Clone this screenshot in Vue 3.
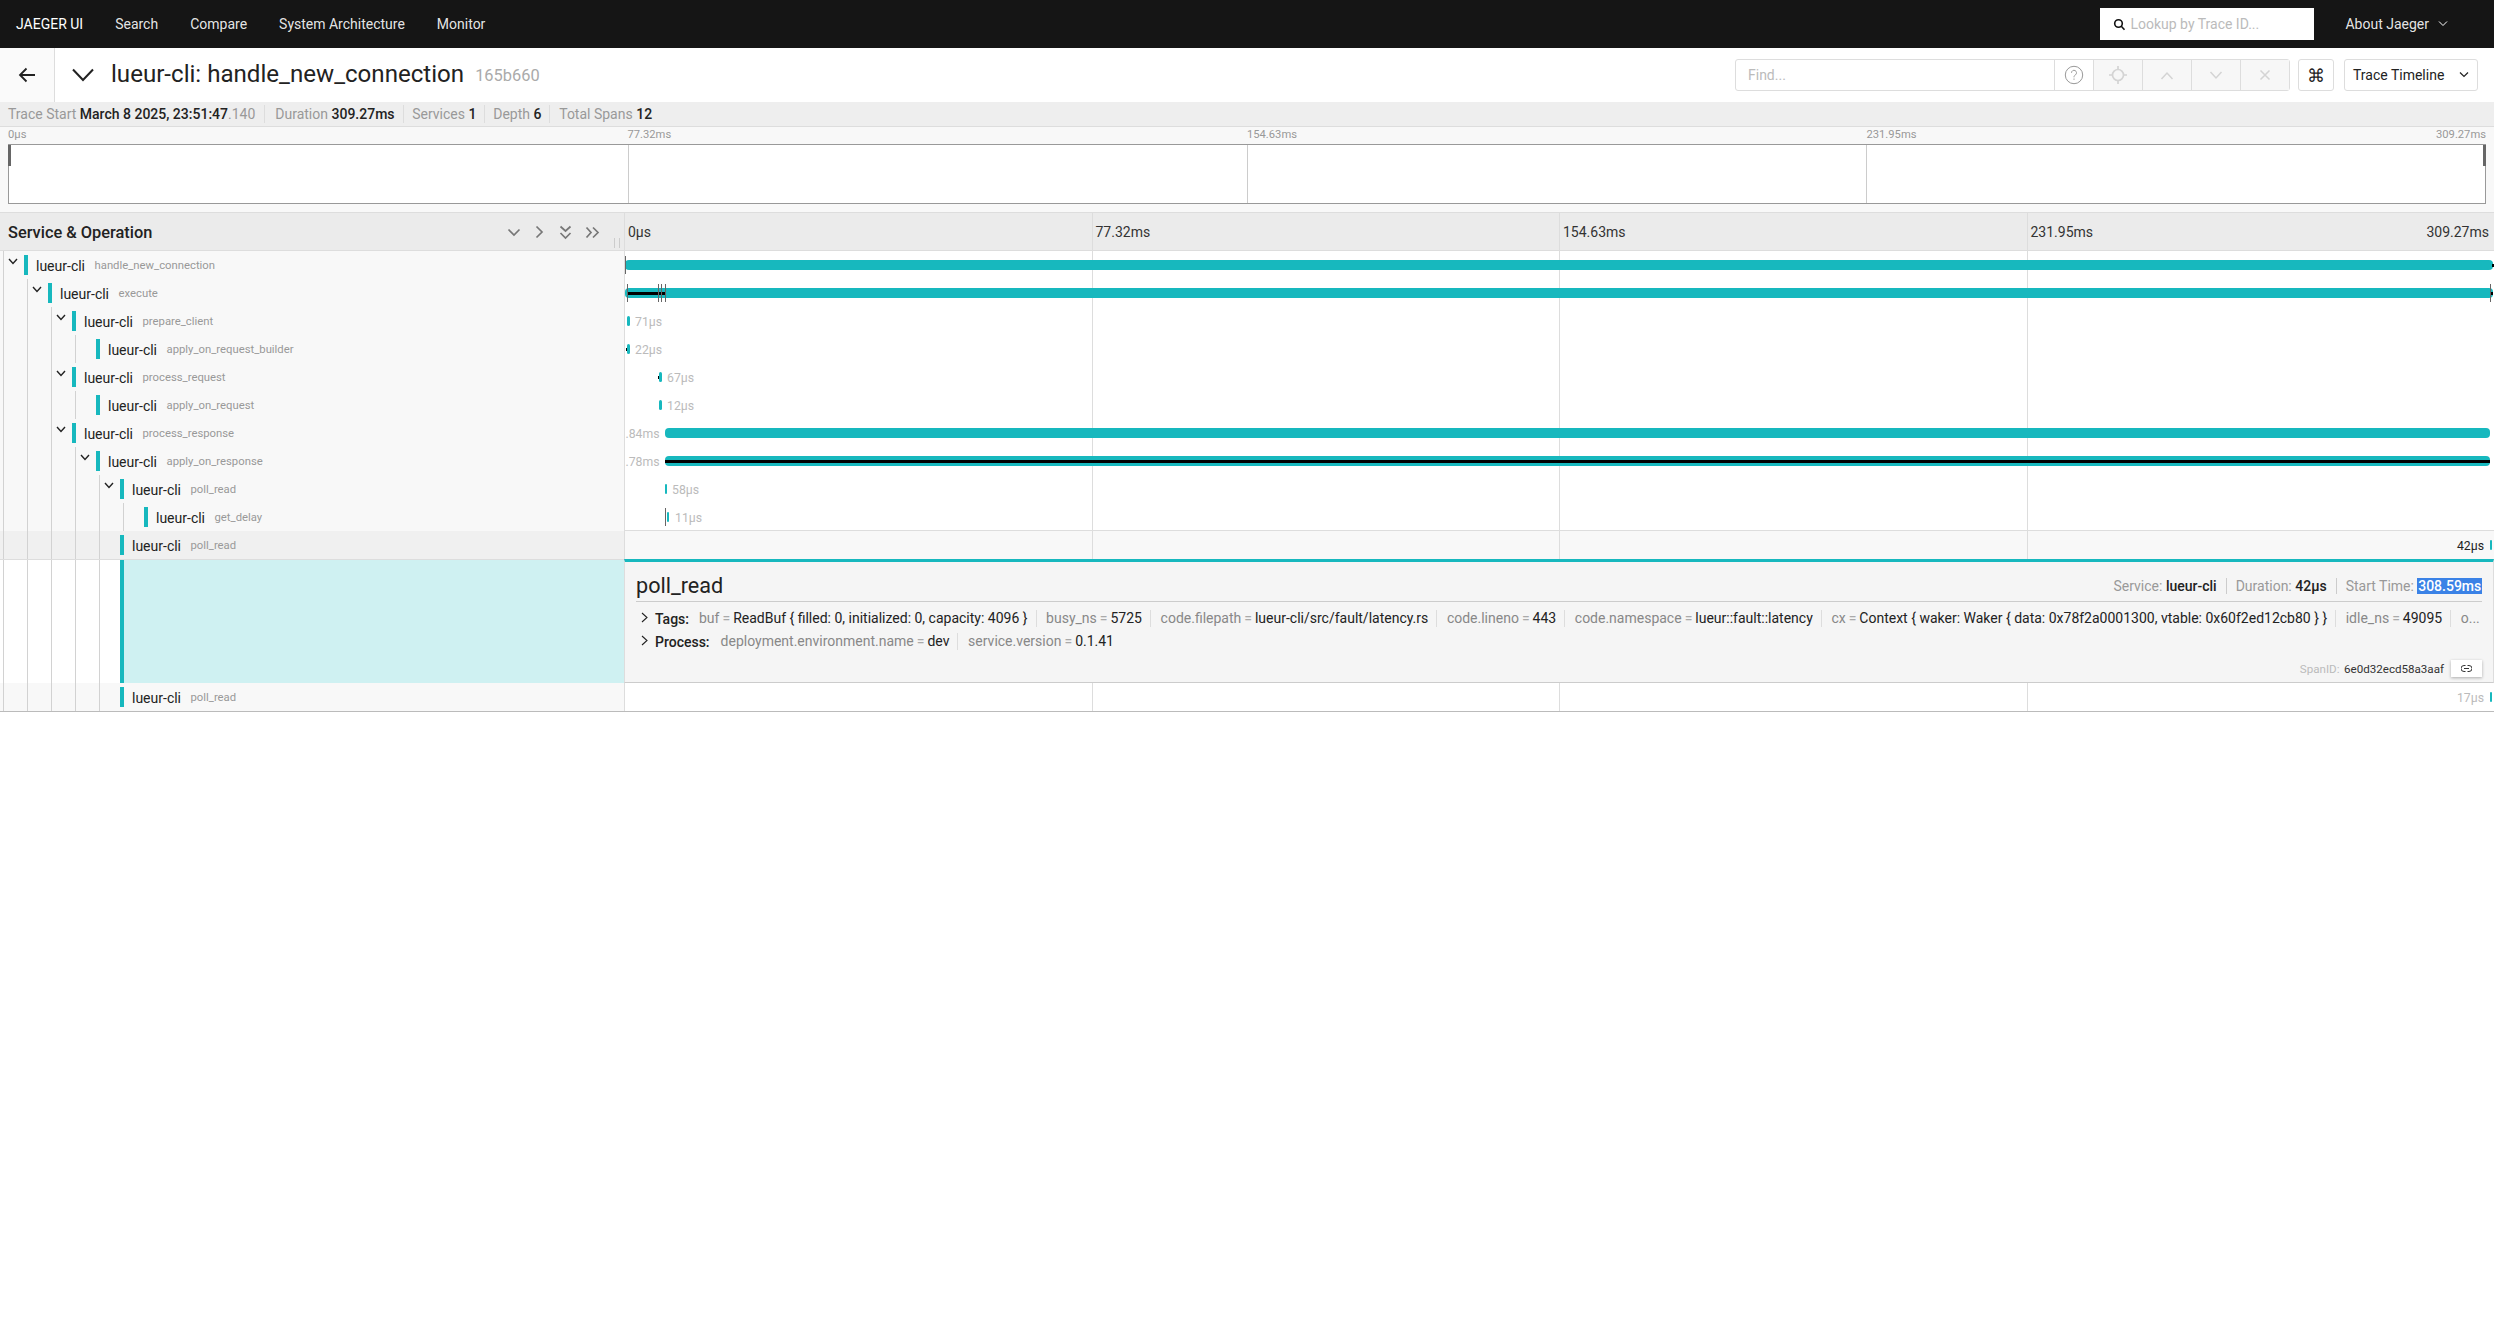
<script setup>
const rows = [
  { d: 0, op: 'handle_new_connection', kids: true, left: 0, w: 1868, ticks: [0], logs: [[1867, 2]] },
  { d: 1, op: 'execute', kids: true, left: 0, w: 1868, ticks: [2, 32.5, 36, 40, 1865], logs: [[2, 38], [1866, 2]] },
  { d: 2, op: 'prepare_client', kids: true, left: 2, w: 2.5, label: '71µs', labelAt: 10 },
  { d: 3, op: 'apply_on_request_builder', left: 2, w: 2.5, label: '22µs', labelAt: 10, logs: [[1, 1]] },
  { d: 2, op: 'process_request', kids: true, left: 34, w: 2.5, label: '67µs', labelAt: 42, logs: [[33, 1]] },
  { d: 3, op: 'apply_on_request', left: 34, w: 2.5, label: '12µs', labelAt: 42 },
  { d: 2, op: 'process_response', kids: true, left: 40, w: 1825, label: '.84ms', labelEnd: 34.5 },
  { d: 3, op: 'apply_on_response', kids: true, left: 40, w: 1825, label: '.78ms', labelEnd: 34.5, logs: [[40, 1825]] },
  { d: 4, op: 'poll_read', kids: true, left: 40, w: 2, label: '58µs', labelAt: 47 },
  { d: 5, op: 'get_delay', left: 42, w: 2, label: '11µs', labelAt: 50, ticks: [40] },
  { d: 4, op: 'poll_read', left: 1865, w: 2, label: '42µs', labelEnd: 1859, expanded: true },
  { d: 4, op: 'poll_read', left: 1865, w: 2, label: '17µs', labelEnd: 1859 },
]
const guides = (d) => Array.from({ length: d }, (_, i) => i)
const tags = [
  ['buf', 'ReadBuf { filled: 0, initialized: 0, capacity: 4096 }'],
  ['busy_ns', '5725'],
  ['code.filepath', 'lueur-cli/src/fault/latency.rs'],
  ['code.lineno', '443'],
  ['code.namespace', 'lueur::fault::latency'],
  ['cx', 'Context { waker: Waker { data: 0x78f2a0001300, vtable: 0x60f2ed12cb80 } }'],
  ['idle_ns', '49095'],
]
const procs = [
  ['deployment.environment.name', 'dev'],
  ['service.version', '0.1.41'],
]
</script>

<template>
  <div class="page">
    <nav class="nav">
      <span class="brand">JAEGER UI</span>
      <a class="nl">Search</a>
      <a class="nl">Compare</a>
      <a class="nl">System Architecture</a>
      <a class="nl">Monitor</a>
      <span class="sp"></span>
      <div class="lookup">
        <svg width="13" height="13" viewBox="0 0 13 13" fill="none" stroke="#111" stroke-width="1.6"><circle cx="5.5" cy="5.5" r="3.8" /><path d="M8.3 8.3 11.5 11.8" /></svg>
        <span>Lookup by Trace ID...</span>
      </div>
      <span class="about">About Jaeger
        <svg width="12" height="8" viewBox="0 0 12 8" fill="none" stroke="#fff" stroke-width="1"><path d="M2 1.5 6 5.5 10 1.5" /></svg>
      </span>
    </nav>

    <header class="head">
      <div class="back">
        <svg width="18" height="16" viewBox="0 0 18 16" fill="none" stroke="#222" stroke-width="1.8"><path d="M17 8H2M8.500 1.500 2 8l6.500 6.500" /></svg>
      </div>
      <svg class="collapse" width="24" height="14" viewBox="0 0 24 14" fill="none" stroke="#222" stroke-width="2"><path d="M2 1.500 12 12 22 1.500" /></svg>
      <h1 class="title">lueur-cli: handle_new_connection</h1>
      <span class="tid">165b660</span>
      <span class="sp"></span>
      <div class="find">
        <span class="find-in">Find...</span>
        <span class="fb help"><svg width="20" height="20" viewBox="0 0 20 20" fill="none" stroke="#999" stroke-width="1"><circle cx="10" cy="10" r="8.700" /><path d="M7.500 7.800a2.500 2.500 0 1 1 4 2C10.500 10.500 10 11 10 12.300M10 13.500v1.300" /></svg></span>
        <span class="fb dis"><svg width="18" height="18" viewBox="0 0 18 18" fill="none" stroke="#d4d4d4" stroke-width="1.700"><circle cx="9" cy="9" r="5.500" /><path d="M9 0v3.500M9 14.500V18M0 9h3.500M14.500 9H18" /></svg></span>
        <span class="fb dis"><svg width="14" height="9" viewBox="0 0 14 9" fill="none" stroke="#d4d4d4" stroke-width="1.500"><path d="M1.500 8 7 2l5.500 6" /></svg></span>
        <span class="fb dis"><svg width="14" height="9" viewBox="0 0 14 9" fill="none" stroke="#d4d4d4" stroke-width="1.500"><path d="M1.500 1 7 7l5.500-6" /></svg></span>
        <span class="fb dis"><svg width="12" height="12" viewBox="0 0 12 12" fill="none" stroke="#d4d4d4" stroke-width="1.500"><path d="M1.500 1.500l9 9M10.500 1.500l-9 9" /></svg></span>
      </div>
      <span class="kbd">⌘</span>
      <div class="view">Trace Timeline
        <svg width="12" height="8" viewBox="0 0 12 8" fill="none" stroke="#222" stroke-width="1.200"><path d="M2 1.500 6 5.500 10 1.500" /></svg>
      </div>
    </header>

    <div class="meta">
      <span class="mi"><i>Trace Start</i> <b>March 8 2025, 23:51:47</b><i>.140</i></span>
      <span class="mi"><i>Duration</i> <b>309.27ms</b></span>
      <span class="mi"><i>Services</i> <b>1</b></span>
      <span class="mi"><i>Depth</i> <b>6</b></span>
      <span class="mi last"><i>Total Spans</i> <b>12</b></span>
    </div>

    <section class="mini">
      <div class="mini-labels">
        <span>0µs</span><span>77.32ms</span><span>154.63ms</span><span>231.95ms</span><span class="end">309.27ms</span>
      </div>
      <div class="mini-box">
        <div class="mc"></div><div class="mc"></div><div class="mc"></div><div class="mc"></div>
        <i class="hand l"></i><i class="hand r"></i>
      </div>
    </section>

    <div class="thead">
      <div class="th-l">
        <span class="th-title">Service &amp; Operation</span>
        <span class="th-icons">
          <svg width="14" height="9" viewBox="0 0 14 9" fill="none" stroke="#777" stroke-width="1.700"><path d="M1.500 1.500 7 7l5.500-5.500" /></svg>
          <svg class="i2" width="9" height="14" viewBox="0 0 9 14" fill="none" stroke="#777" stroke-width="1.700"><path d="M1.500 1.500 7 7l-5.500 5.500" /></svg>
          <svg class="i3" width="13" height="15" viewBox="0 0 13 15" fill="none" stroke="#777" stroke-width="1.700"><path d="M1.500 1.500 6.500 6l5-4.500M1.500 8l5 5 5-5" /></svg>
          <svg class="i4" width="15" height="13" viewBox="0 0 15 13" fill="none" stroke="#777" stroke-width="1.700"><path d="M1.500 1.500 6 6.500l-4.500 5M8 1.500l5 5-5 5" /></svg>
        </span>
        <i class="grip"></i>
      </div>
      <div class="th-r">
        <div class="tc">0µs</div>
        <div class="tc">77.32ms</div>
        <div class="tc">154.63ms</div>
        <div class="tc lastc"><span>231.95ms</span><span>309.27ms</span></div>
      </div>
    </div>

    <div class="rows">
      <template v-for="(r, idx) in rows" :key="idx">
        <div class="row" :class="{ exp: r.expanded }">
          <div class="name">
            <span v-for="g in guides(r.d)" :key="g" class="guide"></span>
            <span class="guide tail">
              <svg v-if="r.kids" width="10" height="7" viewBox="0 0 10 7" fill="none" stroke="#222" stroke-width="1.400"><path d="M1 1 5 5.500 9 1" /></svg>
            </span>
            <span class="svc-bar"></span>
            <span class="svc">lueur-cli</span>
            <span class="op">{{ r.op }}</span>
          </div>
          <div class="tl">
            <div class="gc"></div><div class="gc"></div><div class="gc"></div><div class="gc"></div>
            <div class="bar" :style="{ left: r.left + 1 + 'px', width: r.w + 'px' }"></div>
            <i v-for="(l, li) in r.logs || []" :key="li" class="log" :style="{ left: l[0] + 1 + 'px', width: l[1] + 'px' }"></i>
            <i v-for="t in r.ticks || []" :key="t" class="tick" :style="{ left: t + 1 + 'px' }"></i>
            <span v-if="r.labelAt" class="dur" :style="{ left: r.labelAt + 1 + 'px' }">{{ r.label }}</span>
            <span v-if="r.labelEnd" class="dur" :class="{ dark: r.expanded }" :style="{ right: 1870 - r.labelEnd - 1 + 'px' }">{{ r.label }}</span>
          </div>
        </div>
        <div v-if="r.expanded" class="detail-row">
          <div class="name-d">
            <span v-for="g in guides(r.d)" :key="g" class="guide"></span>
            <span class="guide tail"></span>
            <span class="d-fill"></span>
          </div>
          <div class="detail">
            <div class="d-head">
              <h2 class="d-title">poll_read</h2>
              <div class="d-over">
                <span class="ov"><i>Service:</i> <b>lueur-cli</b></span>
                <span class="ov"><i>Duration:</i> <b>42µs</b></span>
                <span class="ov last"><i>Start Time:</i> <b class="sel">308.59ms</b></span>
              </div>
            </div>
            <div class="kv first">
              <svg class="cv" width="7" height="11" viewBox="0 0 7 11" fill="none" stroke="#222" stroke-width="1.100"><path d="M1 1 6 5.500 1 10" /></svg>
              <b class="kvh">Tags:</b>
              <span class="kvlist">
                <span v-for="t in tags" :key="t[0]" class="pair"><i>{{ t[0] }}</i><u>=</u>{{ t[1] }}</span>
                <span class="pair"><i>o...</i></span>
              </span>
            </div>
            <div class="kv">
              <svg class="cv" width="7" height="11" viewBox="0 0 7 11" fill="none" stroke="#222" stroke-width="1.100"><path d="M1 1 6 5.500 1 10" /></svg>
              <b class="kvh wide">Process:</b>
              <span class="kvlist">
                <span v-for="t in procs" :key="t[0]" class="pair"><i>{{ t[0] }}</i><u>=</u>{{ t[1] }}</span>
              </span>
            </div>
            <div class="d-foot">
              <i class="sid">SpanID:</i> <span class="sidv">6e0d32ecd58a3aaf</span>
              <span class="linkb"><svg width="11" height="7" viewBox="0 0 11 7" fill="none" stroke="#333" stroke-width="1"><path d="M4.500.5H3a3 3 0 0 0 0 6h1.500M6.500.5H8a3 3 0 0 1 0 6H6.500M3 3.500h5" /></svg></span>
            </div>
          </div>
        </div>
      </template>
    </div>
  </div>
</template>

<style>
html, body { background: #fff; }
</style>

<style scoped>
.page { font-family: Roboto, sans-serif; font-size: 14px; color: #222; width: 2494px; }
i { font-style: normal; }
u { text-decoration: none; }
.sp { flex: 1; }
.nav { height: 48px; background: #151515; color: #fff; display: flex; align-items: center; padding-left: 16px; box-sizing: border-box; }
.brand { margin-right: 32px; }
.nl { margin-right: 32px; color: rgba(255,255,255,.9); }
.lookup { width: 214px; height: 32px; background: #fff; box-sizing: border-box; display: flex; align-items: center; gap: 4px; padding-left: 13px; color: #bbb; }
.about { margin-left: 31px; margin-right: 45px; display: flex; align-items: center; gap: 8px; color: rgba(255,255,255,.9); }
.head { height: 54px; display: flex; align-items: center; background: #fff; }
.back { width: 54px; height: 54px; border-right: 1px solid #ddd; display: flex; align-items: center; justify-content: center; background: #fafafa; }
.collapse { margin-left: 16px; }
.title { font-size: 24.1px; font-weight: 400; margin: 0 0 3px 16px; }
.tid { margin-left: 11px; font-size: 16.4px; color: #aaa; }
.find { width: 555px; height: 32px; border: 1px solid #ddd; border-radius: 3px; box-sizing: border-box; display: flex; }
.find-in { width: 319px; color: #bbb; padding-left: 12px; line-height: 30px; box-sizing: border-box; }
.fb { border-left: 1px solid #ddd; display: flex; align-items: center; justify-content: center; box-sizing: border-box; width: 49px; }
.help { width: 39px; }
.dis { background: #f7f7f7; }
.kbd { width: 36px; height: 32px; margin-left: 8px; border: 1px solid #ddd; border-radius: 3px; box-sizing: border-box; display: flex; align-items: center; justify-content: center; font-size: 18px; }
.view { width: 134px; height: 32px; margin: 0 16px 0 10px; border: 1px solid #ddd; border-radius: 3px; box-sizing: border-box; display: flex; align-items: center; padding-left: 8px; gap: 14px; }
.meta { height: 25px; background: #eee; border-bottom: 1px solid #ddd; box-sizing: border-box; display: flex; align-items: center; padding-left: 8px; font-size: 14px; }
.mi { padding-right: 8px; margin-right: 8.8px; border-right: 1px solid #ddd; line-height: 18px; }
.mi:nth-child(1) { padding-right: 9px; margin-right: 10px; }
.mi:nth-child(2) { margin-right: 8.6px; }
.mi:nth-child(3) { margin-right: 7.8px; }
.mi.last { border: 0; }
.mi i { color: #999; }
.mi b { font-weight: 500; }
.mini { height: 85px; background: #f8f8f8; padding: 0 8px; box-sizing: border-box; }
.mini-labels { height: 17px; display: grid; grid-template-columns: 619.5px 619.5px 619.5px 1fr auto; font-size: 11.2px; color: #999; line-height: 15px; }
.mini-box { height: 60px; width: 2478px; background: #fff; border: 1px solid #999; box-sizing: border-box; display: grid; grid-template-columns: repeat(4, 1fr); position: relative; }
.mc + .mc { border-left: 1px solid #ccc; }
.hand { position: absolute; top: 0; width: 3px; height: 21px; background: #666; }
.hand.l { left: -1px; }
.hand.r { right: -1px; }
.thead { display: flex; height: 39px; background: #ebebeb; border-top: 1px solid #ddd; border-bottom: 1px solid #ddd; box-sizing: border-box; }
.th-l { width: 624px; box-sizing: border-box; display: flex; align-items: center; padding: 1px 0 0 8px; position: relative; flex: none; }
.th-title { font-size: 16.38px; font-weight: 500; flex: 1; }
.th-icons { display: flex; align-items: center; margin-right: 24px; }
.i2 { margin-left: 14px; }
.i3 { margin-left: 15px; }
.i4 { margin-left: 13px; }
.grip { position: absolute; right: 4px; bottom: 2px; width: 6px; height: 10px; border-left: 1px solid #ccc; border-right: 1px solid #ccc; box-sizing: border-box; }
.th-r { flex: 1; display: grid; grid-template-columns: repeat(4, 1fr); }
.tc { line-height: 38px; padding-left: 3px; color: #333; border-left: 1px solid #ddd; }
.lastc { display: flex; justify-content: space-between; padding-right: 5px; }
.rows { border-bottom: 1px solid #bbb; }
.row { display: flex; height: 28px; }
.name { width: 624px; box-sizing: border-box; flex: none; background: #f8f8f8; padding-left: 3px; display: flex; align-items: center; }
.guide { width: 24px; height: 100%; border-left: 1px solid #d2d2d2; box-sizing: border-box; flex: none; }
.guide.tail { width: 21px; display: flex; align-items: center; justify-content: center; padding: 0 3px 8px 0; }
.svc-bar { width: 4px; height: 20px; background: #17b8be; flex: none; }
.svc { margin-left: 8px; padding-top: 1px; }
.op { margin-left: 9.5px; font-size: 11.3px; color: #999; padding-top: 1px; }
.tl { flex: 1; display: grid; grid-template-columns: repeat(4, 1fr); position: relative; overflow: hidden; background: #fff; }
.gc { border-left: 1px solid #ddd; }
.bar { position: absolute; top: 9px; height: 10px; background: #17b8be; border-radius: 4px; }
.log { position: absolute; top: 13px; height: 3px; background: #000; }
.tick { position: absolute; top: 5px; height: 18px; width: 1px; background: #666; }
.dur { position: absolute; top: 8px; font-size: 12.25px; color: #bbb; white-space: nowrap; }
.dur.dark { color: #222; }
.exp .name { background: #f0f0f0; }
.exp .tl { background: #f8f8f8; box-shadow: 0 -1px 0 #ddd; overflow: visible; }
.detail-row { display: flex; height: 124px; }
.name-d { width: 624px; flex: none; padding-left: 3px; display: flex; box-sizing: border-box; background: #fff; border-top: 1px solid #ddd; }
.d-fill { flex: 1; background: #cff1f2; border-left: 4px solid #17b8be; }
.detail { flex: 1; min-width: 0; background: #f5f5f5; border-top: 3px solid #17b8be; border-bottom: 1px solid #ccc; border-left: 1px solid #ddd; border-right: 1px solid #ddd; padding: 0 11px; display: flex; flex-direction: column; box-sizing: border-box; }
.d-head { display: flex; align-items: center; height: 40px; padding-top: 8px; box-sizing: border-box; border-bottom: 1px solid #ccc; flex: none; }
.d-title { font-size: 21.6px; font-weight: 400; margin: 0; flex: 1; }
.d-over { display: flex; }
.ov { padding: 0 9px; border-right: 1px solid #ccc; }
.ov.last { border: 0; padding-right: 0; }
.ov i { color: #999; }
.ov b { font-weight: 500; }
.sel { background: #3b82e6; color: #fff; padding: 0 .75px; }
.kv { display: flex; align-items: center; height: 23px; white-space: nowrap; }
.kv.first { margin-top: 5px; }
.cv { margin: 0 7px 2px 5px; }
.kvh { font-weight: 500; margin-right: 10px; }
.kvh.wide { margin-right: 11px; }
.kvlist { display: flex; min-width: 0; }
.pair { padding: 0 8px 0 0; margin-right: 9.6px; border-right: 1px solid #ddd; line-height: 17px; }
.pair:last-child { border: 0; margin: 0; }
.pair i { color: #888; }
.pair u { color: #aaa; margin: 0 3px; }
.d-foot { margin-top: auto; display: flex; align-items: center; justify-content: flex-end; height: 22px; margin-bottom: 2.5px; font-size: 11.6px; }
.sid { color: #bbb; margin-right: 4.5px; }
.sidv { color: #333; }
.linkb { width: 31px; height: 17px; margin-left: 7px; background: #fff; box-shadow: 0 1px 3px rgba(0,0,0,.3); display: flex; align-items: center; justify-content: center; }
</style>
